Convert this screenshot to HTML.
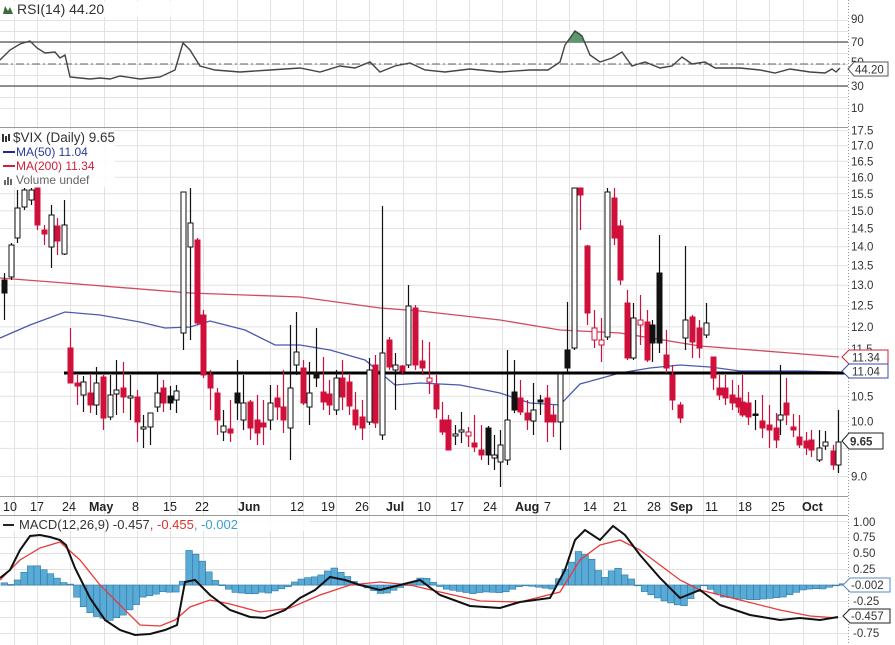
<!DOCTYPE html>
<html><head><meta charset="utf-8"><style>
html,body{margin:0;padding:0;background:#fff;width:895px;height:645px;overflow:hidden}
svg{display:block;font-family:"Liberation Sans",sans-serif}
.ax{font-size:11.5px;fill:#333}
.xl{font-size:12.5px;fill:#222}
.b{font-weight:bold}
</style></head><body>
<svg id="s" width="895" height="645" viewBox="0 0 895 645" xmlns="http://www.w3.org/2000/svg">
<rect width="895" height="645" fill="#fff"/>
<g id="grid" stroke="#e2e2e2" stroke-width="1"></g>
<g id="rsi"></g>
<g id="price"></g>
<g id="macd"></g>
<g stroke="#999" fill="none">
<line x1="0" y1="127.5" x2="848" y2="127.5"/>
<line x1="0" y1="496.5" x2="848" y2="496.5"/>
<line x1="0" y1="515.5" x2="848" y2="515.5"/>
<line x1="848.5" y1="0" x2="848.5" y2="645" stroke-dasharray="1,2"/>
</g>
<rect x="1" y="1" width="180" height="16" fill="#fff" opacity="0.85"/>
<path d="M3 14 L5 6 L8 11 L10 7 L13 14 Z" fill="#3a6a3a"/>
<text x="17" y="14" font-size="14" fill="#333">RSI(14) 44.20</text>
<text class="ax" x="851" y="23">90</text>
<text class="ax" x="851" y="46">70</text>
<text class="ax" x="851" y="66">50</text>
<text class="ax" x="851" y="90">30</text>
<text class="ax" x="851" y="112">10</text>
<path d="M848 69 L854 62 L888 62 L888 76 L854 76 Z" fill="#fff" stroke="#555"/>
<text class="ax" x="855" y="73.5" fill="#333">44.20</text>
<rect x="0" y="129" width="115" height="58" fill="#fff" opacity="0.9"/>
<path d="M2 134 h2 v8 h-2z M5 136 h2 v6 h-2z M8 134 h2 v7 h-2z" fill="#333"/>
<text x="13" y="142" font-size="13.5" fill="#333">$VIX (Daily) 9.65</text>
<line x1="3" y1="152" x2="15" y2="152" stroke="#1a2a9a" stroke-width="2"/>
<text x="16" y="156" font-size="12" fill="#2a3a9a">MA(50) 11.04</text>
<line x1="3" y1="166" x2="15" y2="166" stroke="#d0203a" stroke-width="2"/>
<text x="16" y="170" font-size="12" fill="#d0203a">MA(200) 11.34</text>
<path d="M4 185 v-5 h2 v5z M7 185 v-8 h2 v8z M10 185 v-6 h2 v6z" fill="#666"/>
<text x="16" y="184" font-size="12" fill="#666">Volume undef</text>
<g id="plabels" class="ax"></g>
<path d="M842 357 L849 350 L888 350 L888 364 L849 364 Z" fill="#fff" stroke="#d0203a"/>
<text class="ax" x="852" y="361.5">11.34</text>
<path d="M842 371 L849 364 L888 364 L888 378 L849 378 Z" fill="#fff" stroke="#3a4aaa"/>
<text class="ax" x="852" y="375.5">11.04</text>
<path d="M842 441 L849 433 L883 433 L883 449 L849 449 Z" fill="#fff" stroke="#222"/>
<text class="ax b" x="850" y="445.5" fill="#000">9.65</text>
<g class="xl">
<text x="3" y="511">10</text><text x="30" y="511">17</text><text x="62" y="511">24</text>
<text x="89" y="511" class="b">May</text><text x="132" y="511">8</text><text x="163" y="511">15</text><text x="195" y="511">22</text>
<text x="238" y="511" class="b">Jun</text><text x="290" y="511">12</text><text x="321" y="511">19</text><text x="355" y="511">26</text>
<text x="386" y="511" class="b">Jul</text><text x="417" y="511">10</text><text x="450" y="511">17</text><text x="483" y="511">24</text>
<text x="515" y="511" class="b">Aug</text><text x="544" y="511">7</text><text x="583" y="511">14</text><text x="613" y="511">21</text><text x="647" y="511">28</text>
<text x="670" y="511" class="b">Sep</text><text x="705" y="511">11</text><text x="738" y="511">18</text><text x="771" y="511">25</text>
<text x="802" y="511" class="b">Oct</text>
</g>
<rect x="0" y="516" width="310" height="15" fill="#fff" opacity="0.85"/>
<line x1="3" y1="525" x2="14" y2="525" stroke="#222" stroke-width="2"/>
<text x="19" y="529" font-size="13" fill="#333">MACD(12,26,9) -0.457<tspan fill="#e03030">, -0.455</tspan><tspan fill="#3aa0d0">, -0.002</tspan></text>
<text class="ax" x="853" y="526">1.00</text>
<text class="ax" x="853" y="541">0.75</text>
<text class="ax" x="853" y="557">0.50</text>
<text class="ax" x="853" y="573">0.25</text>
<text class="ax" x="853" y="605">-0.25</text>
<text class="ax" x="853" y="637">-0.75</text>
<path d="M843 585 L850 578 L890 578 L890 592 L850 592 Z" fill="#fff" stroke="#5a8ac0"/>
<text class="ax" x="851" y="589">-0.002</text>
<path d="M843 616 L850 609 L890 609 L890 623 L850 623 Z" fill="#fff" stroke="#222"/>
<text class="ax" x="851" y="620">-0.457</text>
</svg>
<script>
(function(){
var NS="http://www.w3.org/2000/svg";
function el(p,t,a){var e=document.createElementNS(NS,t);for(var k in a)e.setAttribute(k,a[k]);p.appendChild(e);return e;}
var grid=document.getElementById('grid');
var vx=[14,37,70,104,137,170,203,237,270,303,336,369,403,436,469,502,536,569,603,636,669,703,736,769,803,837];
vx.forEach(function(x){el(grid,'line',{x1:x+.5,y1:0,x2:x+.5,y2:645});});
var py=function(p){return 1619-520*Math.log(p);};
var pl=document.getElementById('plabels');
for(var p=9;p<=17.51;p+=0.5){var y=py(p);el(grid,'line',{x1:0,y1:y,x2:848,y2:y});
 if(Math.abs(p-11)>0.01&&Math.abs(p-9.5)>0.01){var t=el(pl,'text',{x:851,y:y+4});t.textContent=p.toFixed(1);}}
for(var r=10;r<=90;r+=10){var y=Math.round(108-(r-10)*1.1)+.5;el(grid,'line',{x1:0,y1:y,x2:848,y2:y});}
for(var v=-0.75;v<=1.01;v+=0.25){var y=Math.round(585-v*64)+.5;el(grid,'line',{x1:0,y1:y,x2:848,y2:y});}
var rsi=document.getElementById('rsi');
el(rsi,'line',{x1:0,y1:42,x2:848,y2:42,stroke:'#555','stroke-width':1.3});
el(rsi,'line',{x1:0,y1:86,x2:848,y2:86,stroke:'#555','stroke-width':1.3});
el(rsi,'line',{x1:0,y1:64,x2:848,y2:64,stroke:'#666','stroke-dasharray':'8,3,2,3'});
el(rsi,'path',{d:'M568 42 L574 31 L580 33 L584 42 Z',fill:'#5a9a6a'});
var rp=[[0,60],[10,50],[20,44],[30,41],[37,48],[45,53],[55,52],[60,58],[65,55],[70,77],[80,78],[90,79],[100,78],[110,79],[120,76],[140,79],[160,77],[175,70],[183,43],[190,50],[200,66],[215,70],[240,72],[270,70],[300,68],[320,72],[340,66],[355,68],[370,62],[380,72],[395,66],[410,63],[425,70],[445,72],[470,69],[500,72],[530,70],[548,70],[560,62],[565,45],[575,31],[582,36],[590,55],[600,62],[612,58],[622,52],[632,66],[645,62],[660,68],[672,66],[682,57],[692,64],[705,62],[715,68],[740,68],[760,70],[775,73],[790,69],[810,72],[825,73],[832,69],[836,72],[840,68]];
el(rsi,'polyline',{points:rp.join(' '),fill:'none',stroke:'#444','stroke-width':1.4});
var pr=document.getElementById('price');
function line(pts,c){el(pr,'polyline',{points:pts.join(' '),fill:'none',stroke:c,'stroke-width':1.3});}
line([[0,278],[65,283],[190,293],[300,297],[380,308],[420,311],[500,320],[560,330],[620,333],[700,346],[790,353],[839,357]],'#d04a60');
line([[0,338],[30,325],[65,312],[100,315],[140,322],[165,328],[190,327],[210,321],[245,330],[275,345],[300,345],[330,350],[365,360],[395,385],[420,383],[460,385],[500,393],[530,403],[560,405],[580,384],[620,373],[650,368],[680,365],[710,367],[740,371],[800,371],[839,372]],'#4a5ab0');
el(pr,'line',{x1:64,y1:373,x2:848,y2:373,stroke:'#000','stroke-width':3});
var C=[[4,273,320,280,293,'k'],[11,243,280,245,277,'w'],[17,190,243,208,238,'w'],[24,188,210,190,207,'w'],[31,188,205,190,200,'w'],[37,188,230,188,225,'r'],[44,225,245,230,234,'r'],[51,205,268,215,247,'w'],[57,218,255,226,241,'r'],[64,200,255,225,254,'w'],
[70,328,383,348,383,'r'],[77,375,405,383,386,'r'],[83,376,412,382,395,'w'],[90,375,413,393,405,'r'],[96,367,415,383,405,'w'],[103,375,430,377,418,'r'],[110,375,420,395,417,'w'],[116,360,415,390,394,'w'],[123,362,413,388,397,'r'],[130,375,420,396,398,'w'],[137,390,442,397,422,'r'],[143,415,448,427,429,'w'],[150,415,445,413,427,'w'],[157,372,412,393,407,'w'],[163,380,412,388,403,'r'],[170,386,410,396,403,'k'],[176,385,413,391,400,'w'],
[183,192,350,192,333,'w'],[190,188,340,223,247,'w'],[197,238,325,240,323,'r'],[203,310,378,315,375,'r'],[210,370,410,375,388,'r'],[217,388,435,393,420,'r'],[223,410,441,426,432,'w'],[230,400,442,429,433,'r'],[237,360,420,393,403,'k'],[243,375,430,403,420,'w'],[250,400,440,402,428,'r'],[257,395,445,420,433,'r'],[263,400,445,423,427,'r'],[270,385,430,403,420,'w'],[277,385,420,398,407,'r'],[283,370,433,407,420,'r'],[290,325,460,388,428,'w'],
[296,312,375,352,365,'w'],[303,360,405,368,403,'r'],[309,362,425,393,407,'w'],[316,328,387,372,378,'k'],[323,357,410,392,402,'r'],[329,380,415,394,405,'r'],[336,370,415,378,410,'w'],[342,360,410,378,397,'r'],[349,375,415,382,406,'r'],[355,392,430,410,425,'r'],[362,400,440,417,428,'r'],[369,358,425,370,422,'w'],[375,355,428,365,423,'r'],[382,206,440,353,435,'w'],[389,337,370,340,367,'r'],[395,353,410,365,370,'w'],[402,365,375,366,371,'r'],[408,285,368,306,365,'w'],[415,305,370,308,365,'r'],[422,340,375,361,368,'r'],[429,342,394,378,382,'o'],[436,375,418,385,409,'r'],[442,402,435,420,432,'r'],[448,415,450,420,450,'r'],[455,425,445,434,436,'w'],[461,412,443,430,432,'w'],[468,427,447,432,436,'o'],[474,415,452,443,447,'r'],[481,425,460,450,455,'r'],[488,426,465,428,455,'k'],[494,435,470,455,458,'w'],[500,430,487,445,462,'w'],[507,350,465,420,460,'w'],[514,360,413,392,410,'k'],[520,380,415,398,412,'r'],[527,400,430,413,420,'r'],[533,383,435,410,421,'w'],[540,395,415,400,402,'k'],[547,385,442,398,422,'r'],[553,405,437,415,422,'r'],[560,372,450,374,422,'w'],[567,302,373,350,368,'k'],
[574,172,350,177,348,'w'],[580,137,230,173,195,'r'],[587,245,325,246,313,'r'],[594,310,348,328,340,'o'],[601,318,362,340,345,'o'],[607,185,340,192,337,'w'],[614,177,245,198,238,'r'],[620,220,285,226,280,'r'],[627,290,360,303,358,'r'],[633,303,360,318,358,'w'],[640,295,345,320,325,'o'],[647,310,362,322,360,'r'],[652,320,362,325,343,'k'],[659,235,353,273,343,'k'],[666,330,373,355,368,'r'],[672,365,410,375,400,'r'],[680,402,423,405,418,'r'],[685,246,350,320,338,'w'],[692,315,358,317,342,'r'],[699,320,358,328,348,'r'],[706,303,338,323,335,'w'],[713,357,390,357,378,'r'],[719,375,400,388,395,'r'],[725,375,405,388,398,'r'],[732,380,410,395,403,'r'],[738,385,413,398,407,'r'],[742,375,417,402,415,'r'],[748,392,425,403,417,'r'],[755,400,430,414,415,'k'],[762,395,438,421,428,'r'],[769,405,448,425,430,'r'],[776,413,448,428,440,'r'],[780,365,435,415,420,'w'],[786,378,425,403,415,'r'],[793,414,437,427,430,'r'],[799,415,448,437,445,'r'],[806,432,455,441,448,'r'],[811,430,457,440,450,'r'],[819,430,462,448,460,'w'],[825,431,450,442,446,'w'],[833,445,470,451,465,'r'],[838,410,473,442,465,'w']];
var clipTop=188;
C.forEach(function(c){var x=c[0],t=c[5];var col=(t=='r'||t=='o')?'#d0103a':'#111';
 el(pr,'line',{x1:x+.5,y1:Math.max(c[1],clipTop),x2:x+.5,y2:c[2],stroke:col,'stroke-width':1.2});
 var fill=t=='r'?'#d0103a':t=='k'?'#111':'#fff';
 el(pr,'rect',{x:x-2,y:Math.max(c[3],clipTop),width:5,height:Math.max(1.5,c[4]-Math.max(c[3],clipTop)),fill:fill,stroke:col,'stroke-width':1});});
var mg=document.getElementById('macd');
var M=[[0,578],[10,570],[20,550],[30,536],[40,535],[50,537],[60,540],[66,545],[75,568],[90,598],[105,620],[120,630],[135,635],[150,634],[165,630],[177,625],[185,582],[195,580],[210,595],[230,610],[250,617],[265,618],[285,610],[300,598],[315,590],[330,577],[345,580],[360,585],[380,590],[400,585],[420,580],[440,595],[470,606],[500,608],[520,602],[550,598],[565,570],[575,540],[585,530],[600,540],[613,526],[625,535],[640,555],[660,578],[680,598],[700,590],[720,605],[750,615],[780,620],[800,618],[820,620],[838,617]];
var S=[[0,580],[20,560],[40,548],[60,542],[80,560],[100,585],[120,605],[140,625],[160,626],[175,620],[190,607],[210,600],[230,604],[260,612],[290,608],[320,595],[350,585],[380,582],[410,585],[440,592],[480,601],[520,602],[560,592],[580,560],[600,545],[620,540],[640,550],[660,565],[680,580],[700,590],[740,600],[780,610],[810,616],[838,618]];
function at(a,x){for(var i=1;i<a.length;i++){if(x<=a[i][0]){var f=(x-a[i-1][0])/(a[i][0]-a[i-1][0]);return a[i-1][1]+f*(a[i][1]-a[i-1][1]);}}return a[a.length-1][1];}
for(var x=1;x<840;x+=6.6){var d=(at(S,x)-at(M,x))*1.2;var y0=585;var h=Math.abs(d);
 el(mg,'rect',{x:x,y:d>0?y0-d:y0,width:6.6,height:Math.max(h,0.8),fill:'#5aaad6',stroke:'#2a78a8','stroke-width':0.6});}
el(mg,'polyline',{points:S.join(' '),fill:'none',stroke:'#e83a3a','stroke-width':1.3});
el(mg,'polyline',{points:M.join(' '),fill:'none',stroke:'#111','stroke-width':2});
})();
</script>
</body></html>
